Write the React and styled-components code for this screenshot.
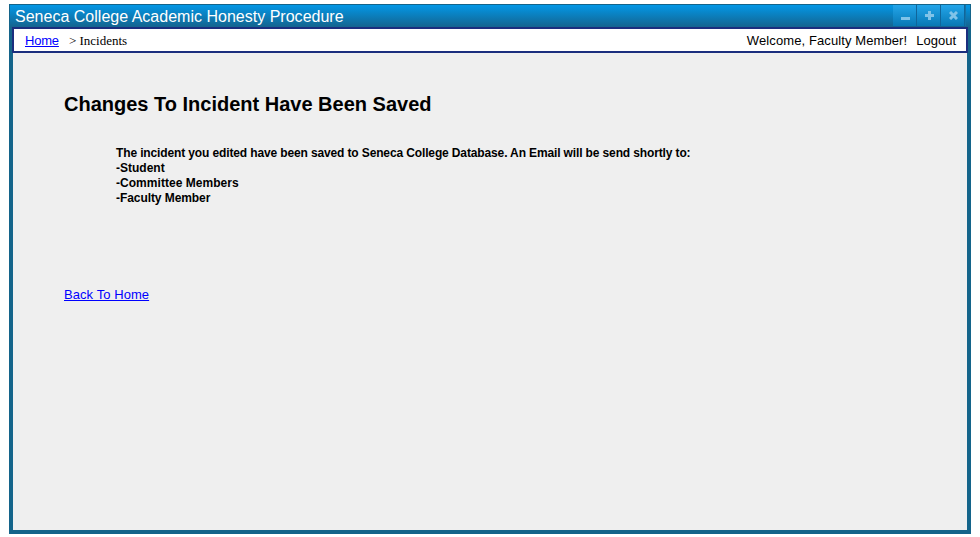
import React from "react";
import styled, { createGlobalStyle } from "styled-components";

const GlobalStyle = createGlobalStyle`
  *, *::before, *::after { box-sizing: border-box; }
  html, body { margin: 0; background: #fff; overflow: hidden; }
  body { font-family: "Liberation Sans", Arial, sans-serif; color: #000; }
`;

const Page = styled.div`
  height: 537px;
  padding: 4px 9px 3px;
`;

const Window = styled.main`
  display: flex;
  flex-direction: column;
  width: 962px;
  height: 530px;
  background: #14648a;
`;

const TitleBar = styled.header`
  display: flex;
  justify-content: space-between;
  flex: none;
  height: 23px;
  padding: 0 4px 0 5px;
  border: solid #14648a;
  border-width: 1px 1px 0;
  background: linear-gradient(#0397e6, #14648f);
`;

const Title = styled.h1`
  margin: 0;
  font-size: 16px;
  font-weight: 400;
  line-height: 23px;
  letter-spacing: 0.01px;
  color: #fff;
  white-space: nowrap;
`;

const Controls = styled.div`
  display: flex;
  height: 21px;
  border-right: 1px solid #1473a6;
`;

const ControlButton = styled.button`
  display: flex;
  align-items: center;
  justify-content: center;
  width: 24px;
  height: 21px;
  padding: 0 0 0 1px;
  border: 0;
  border-right: 1px solid #10659a;
  background: linear-gradient(#23a5ea, #0878b4);
`;

const NavBar = styled.nav`
  display: flex;
  align-items: center;
  flex: none;
  height: 26px;
  margin: 0 3px;
  padding: 1px 10px 0 11px;
  border: 2px solid #1b2e7e;
  background: #fff;
  font-size: 13px;
  line-height: 17px;
  white-space: nowrap;
`;

const Link = styled.a`
  color: #00f;
  text-decoration: underline;
  font-size: 13px;
  letter-spacing: ${(p) => p.$spacing || "normal"};
`;

const Crumb = styled.span`
  margin-left: 10px;
  font-family: "Liberation Serif", "Times New Roman", serif;
  font-size: 13px;
`;

const Welcome = styled.span`
  margin-left: auto;
  letter-spacing: 0.1px;
`;

const Logout = styled.span`
  margin-left: 9px;
`;

const Content = styled.section`
  flex: 1;
  margin: 0 4px 4px;
  padding: 39px 51px 0;
  background: #efefef;
`;

const Heading = styled.h2`
  margin: 0;
  font-size: 20px;
  line-height: 24px;
  white-space: nowrap;
`;

const Message = styled.div`
  margin: 30px 0 79px 52px;
  font-size: 12px;
  font-weight: 700;
  line-height: 15px;
  white-space: nowrap;
`;

const MessageLine = styled.div`
  letter-spacing: ${(p) => p.$spacing || "normal"};
`;

const Glyph = ({ d }) => (
  <svg width="9" height="9" viewBox="0 0 9 9" fill="none" stroke="#80c3e8" strokeWidth="3" aria-hidden="true">
    <path d={d} />
  </svg>
);

const controls = [
  { label: "Minimize", d: "M0 7.5H9" },
  { label: "Maximize", d: "M0 4.5H9M4.5 0V9" },
  { label: "Close", d: "M1 1L8 8M8 1L1 8" },
];

export default function App() {
  return (
    <Page>
      <GlobalStyle />
      <Window>
        <TitleBar>
          <Title>Seneca College Academic Honesty Procedure</Title>
          <Controls>
            {controls.map((c) => (
              <ControlButton key={c.label} aria-label={c.label}>
                <Glyph d={c.d} />
              </ControlButton>
            ))}
          </Controls>
        </TitleBar>
        <NavBar>
          <Link href="#" $spacing="-0.2px">Home</Link>
          <Crumb>&gt; Incidents</Crumb>
          <Welcome>Welcome, Faculty Member!</Welcome>
          <Logout>Logout</Logout>
        </NavBar>
        <Content>
          <Heading>Changes To Incident Have Been Saved</Heading>
          <Message>
            <MessageLine $spacing="-0.131px">
              The incident you edited have been saved to Seneca College Database. An Email will be send shortly to:
            </MessageLine>
            <MessageLine>-Student</MessageLine>
            <MessageLine $spacing="0.04px">-Committee Members</MessageLine>
            <MessageLine $spacing="-0.07px">-Faculty Member</MessageLine>
          </Message>
          <Link href="#" $spacing="0.07px">Back To Home</Link>
        </Content>
      </Window>
    </Page>
  );
}
